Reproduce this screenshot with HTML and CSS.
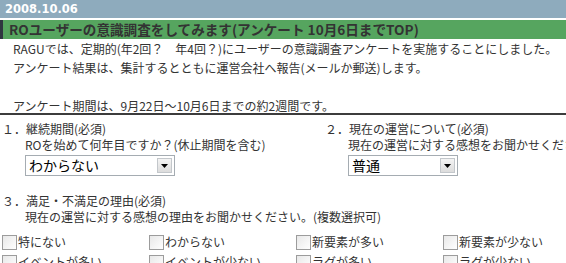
FILE: index.html
```html
<!DOCTYPE html>
<html lang="ja">
<head>
<meta charset="utf-8">
<title>ROユーザーの意識調査</title>
<link rel="stylesheet" href="styles.css">
</head>
<body>
<div class="page">
  <div class="date">2008.10.06</div>
  <h2 class="title">ROユーザーの意識調査をしてみます(アンケート 10月6日までTOP)</h2>
  <div class="intro">
    <p>RAGUでは、定期的(年2回？　年4回？)にユーザーの意識調査アンケートを実施することにしました。<br>アンケート結果は、集計するとともに運営会社へ報告(メールか郵送)します。</p>
    <p class="period">アンケート期間は、9月22日～10月6日までの約2週間です。</p>
  </div>
  <div class="rule"></div>

  <div class="qrow">
    <div class="q q1">
      <div class="qlabel">１．継続期間(必須)</div>
      <div class="qsub">ROを始めて何年目ですか？(休止期間を含む)</div>
      <div class="qsub">
        <div class="sel sel-wide"><span class="sel-text">わからない</span><span class="sel-btn"><svg width="7" height="4" viewBox="0 0 7 4"><path d="M0 0h7L3.5 4z" fill="#000"/></svg></span></div>
      </div>
    </div>
    <div class="q q2">
      <div class="qlabel">２．現在の運営について(必須)</div>
      <div class="qsub">現在の運営に対する感想をお聞かせください。</div>
      <div class="qsub">
        <div class="sel sel-narrow"><span class="sel-text">普通</span><span class="sel-btn"><svg width="7" height="4" viewBox="0 0 7 4"><path d="M0 0h7L3.5 4z" fill="#000"/></svg></span></div>
      </div>
    </div>
  </div>

  <div class="q q3">
    <div class="qlabel">３．満足・不満足の理由(必須)</div>
    <div class="qsub">現在の運営に対する感想の理由をお聞かせください。(複数選択可)</div>
  </div>
  <div class="checks">
    <label class="chk"><span class="box"></span>特にない</label>
    <label class="chk"><span class="box"></span>わからない</label>
    <label class="chk"><span class="box"></span>新要素が多い</label>
    <label class="chk"><span class="box"></span>新要素が少ない</label>
    <label class="chk"><span class="box"></span>イベントが多い</label>
    <label class="chk"><span class="box"></span>イベントが少ない</label>
    <label class="chk"><span class="box"></span>ラグが多い</label>
    <label class="chk"><span class="box"></span>ラグが少ない</label>
  </div>
</div>
</body>
</html>
```

FILE: styles.css
```css
html, body {
  margin: 0;
  padding: 0;
  background: #fff;
  overflow: hidden;
}
body {
  font-family: "Noto Sans CJK JP", "Noto Sans", sans-serif;
  font-size: 12px;
  color: #333;
}
.page {
  width: 700px;
}
.date {
  height: 18px;
  line-height: 18px;
  background: #8eabbd;
  color: #fff;
  font-family: "DejaVu Sans", sans-serif;
  font-weight: bold;
  font-size: 11.5px;
  padding-left: 5px;
}
.title {
  margin: 2px 0 0 0;
  height: 19px;
  line-height: 19px;
  background: #56a55f;
  border-left: 3px solid #2f3640;
  padding-left: 6px;
  font-size: 13.6px;
  font-weight: bold;
  color: #333;
}
.intro {
  padding-left: 13px;
  line-height: 19px;
}
.intro p {
  margin: 0;
  white-space: nowrap;
}
.intro .period {
  margin-top: 19px;
}
.rule {
  border-top: 2px solid #3c3c3c;
  margin-top: -2px;
}
.qrow {
  display: flex;
  padding-top: 6px;
}
.q {
  line-height: 16px;
  white-space: nowrap;
}
.q1 {
  width: 323px;
  flex: none;
}
.qlabel {
  padding-left: 2px;
}
.qsub {
  padding-left: 25px;
}
.sel {
  margin-top: 2px;
  height: 19px;
  border: 1px solid #a5acb2;
  background: #fff;
  display: flex;
  align-items: center;
  box-sizing: content-box;
}
.sel-wide { width: 148px; }
.sel-narrow { width: 108px; }
.sel-text {
  flex: 1;
  font-size: 14px;
  line-height: 19px;
  padding-left: 3px;
  color: #000;
}
.sel-btn {
  width: 15px;
  height: 15px;
  margin-right: 2px;
  box-sizing: border-box;
  border: 1px solid #c3c7cb;
  background: linear-gradient(#f4f4f4, #dcdcdc);
  display: flex;
  align-items: center;
  justify-content: center;
}
.q3 {
  margin-top: 17px;
}
.checks {
  margin-top: 7px;
  display: grid;
  grid-template-columns: repeat(4, 147px);
  padding-left: 2px;
}
.chk {
  height: 20px;
  display: flex;
  align-items: center;
  white-space: nowrap;
  line-height: 20px;
}
.box {
  width: 13px;
  height: 13px;
  border: 1px solid #9c9c9c;
  background: linear-gradient(135deg, #e8e8e8, #fff);
  margin-right: 1px;
  flex: none;
}
```
